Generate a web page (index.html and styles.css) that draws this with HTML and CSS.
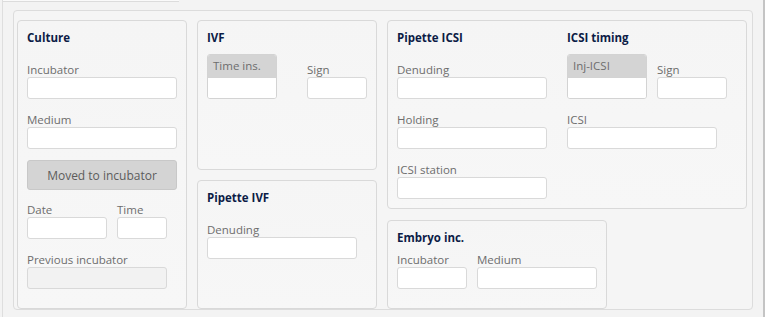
FILE: index.html
```html
<!DOCTYPE html>
<html lang="en">
<head>
    <meta charset="UTF-8">
    <title>Culture</title>
    <link rel="stylesheet" href="styles.css">
</head>
<body>
  <div class="frame">
    <div class="tab-edge"></div>
    <div class="panel">

      <div class="group group-culture">
        <h3>Culture</h3>
        <div class="field"><label>Incubator</label><input type="text" class="w150"></div>
        <div class="field"><label>Medium</label><input type="text" class="w150"></div>
        <button class="btn-moved">Moved to incubator</button>
        <div class="row row-date">
          <div class="field"><label>Date</label><input type="text" class="w80"></div>
          <div class="field"><label>Time</label><input type="text" class="w50"></div>
        </div>
        <div class="field"><label>Previous incubator</label><input type="text" class="w140" disabled></div>
      </div>

      <div class="col col-mid">
        <div class="group group-ivf">
          <h3>IVF</h3>
          <div class="row row-wide">
            <div class="stamp w70">
              <div class="stamp-head">Time ins.</div>
              <input type="text" class="stamp-input">
            </div>
            <div class="field"><label>Sign</label><input type="text" class="w60"></div>
          </div>
        </div>
        <div class="group group-pivf">
          <h3>Pipette IVF</h3>
          <div class="field"><label>Denuding</label><input type="text" class="w150"></div>
        </div>
      </div>

      <div class="col col-right">
        <div class="group group-icsi">
          <div class="row row-cols">
            <div class="sub">
              <h3>Pipette ICSI</h3>
              <div class="field"><label>Denuding</label><input type="text" class="w150"></div>
              <div class="field"><label>Holding</label><input type="text" class="w150"></div>
              <div class="field"><label>ICSI station</label><input type="text" class="w150"></div>
            </div>
            <div class="sub">
              <h3>ICSI timing</h3>
              <div class="row row-sign">
                <div class="stamp w80">
                  <div class="stamp-head">Inj-ICSI</div>
                  <input type="text" class="stamp-input">
                </div>
                <div class="field"><label>Sign</label><input type="text" class="w70"></div>
              </div>
              <div class="field"><label>ICSI</label><input type="text" class="w150"></div>
            </div>
          </div>
        </div>
        <div class="group group-embryo">
          <h3>Embryo inc.</h3>
          <div class="row row-date">
            <div class="field"><label>Incubator</label><input type="text" class="w70"></div>
            <div class="field"><label>Medium</label><input type="text" class="w120"></div>
          </div>
        </div>
      </div>

    </div>
  </div>
</body>
</html>
```

FILE: styles.css
```css
body {
    margin: 0;
    background-color: #f3f3f3;
    font-family: "Open Sans", sans-serif;
    font-size: 11.5px;
    color: #6d6d6d;
}
.frame {
    margin-left: 2px;
    width: 763px;
    height: 317px;
    border-left: 1px solid #dedede;
    border-right: 2px solid #c4c4c4;
    box-sizing: border-box;
}
.tab-edge {
    width: 176px;
    height: 1px;
    border-bottom: 1px solid #dcdcdc;
    background: #fafafa;
}
.panel {
    margin: 8px 0 0 10px;
    width: 740px;
    height: 300px;
    box-sizing: border-box;
    padding: 9px 5px 0 3px;
    border: 1px solid #dcdcdc;
    border-radius: 4px;
    background: #f5f5f5;
    display: flex;
    gap: 10px;
}
.group {
    box-sizing: border-box;
    padding: 9px;
    border: 1px solid #d9d9d9;
    border-radius: 4px;
    background: linear-gradient(#f5f5f5, #f7f7f7);
}
.col {
    display: flex;
    flex-direction: column;
}
h3 {
    margin: 0;
    padding-bottom: 3px;
    height: 16px;
    line-height: 16px;
    font-size: 11.5px;
    font-weight: bold;
    color: #0c1c46;
}
.field {
    margin-top: 13px;
}
label {
    display: block;
    height: 15px;
    line-height: 15px;
    white-space: nowrap;
}
input {
    display: block;
    box-sizing: border-box;
    height: 22px;
    margin: 0;
    padding: 0 4px;
    border: 1px solid #d9d9d9;
    border-radius: 3px;
    background: #fff;
    font: inherit;
}
input:disabled {
    background: #f2f2f2;
}
.w50 { width: 50px; }
.w60 { width: 60px; }
.w70 { width: 70px; }
.w80 { width: 80px; }
.w120 { width: 120px; }
.w140 { width: 140px; }
.w150 { width: 150px; }

.row {
    display: flex;
    align-items: flex-start;
}
.btn-moved {
    display: block;
    margin-top: 11px;
    width: 150px;
    height: 30px;
    border: 1px solid #c8c8c8;
    border-radius: 3px;
    background: #d4d4d4;
    color: #5c5c5c;
    font: inherit;
    font-size: 12px;
}
.row-date {
    gap: 10px;
}
.row-date .field {
    margin-top: 12px;
}
.group-culture {
    width: 170px;
}
.col-mid {
    width: 180px;
    gap: 10px;
}
.group-ivf {
    height: 150px;
}
.group-pivf {
    flex: 1;
}
.row-wide {
    gap: 30px;
}
.row-sign {
    gap: 10px;
}
.stamp {
    margin-top: 5px;
    box-sizing: border-box;
    border: 1px solid #d3d3d3;
    border-radius: 3px;
    overflow: hidden;
    background: #fff;
}
.stamp-head {
    height: 22px;
    box-sizing: border-box;
    padding: 2px 0 0 5px;
    line-height: 18px;
    background: #d4d4d4;
    color: #6d6d6d;
}
.stamp-input {
    width: 100%;
    height: 21px;
    border: none;
    border-top: 1px solid #d3d3d3;
    border-radius: 0;
}
.col-right {
    width: 360px;
    gap: 11px;
}
.group-icsi .row-cols {
    gap: 20px;
}
.sub {
    width: 150px;
}
.sub + .sub {
    width: 160px;
}
.group-embryo {
    width: 220px;
    flex: 1;
}
.group-embryo .row-date .field {
    margin-top: 3px;
}
```
